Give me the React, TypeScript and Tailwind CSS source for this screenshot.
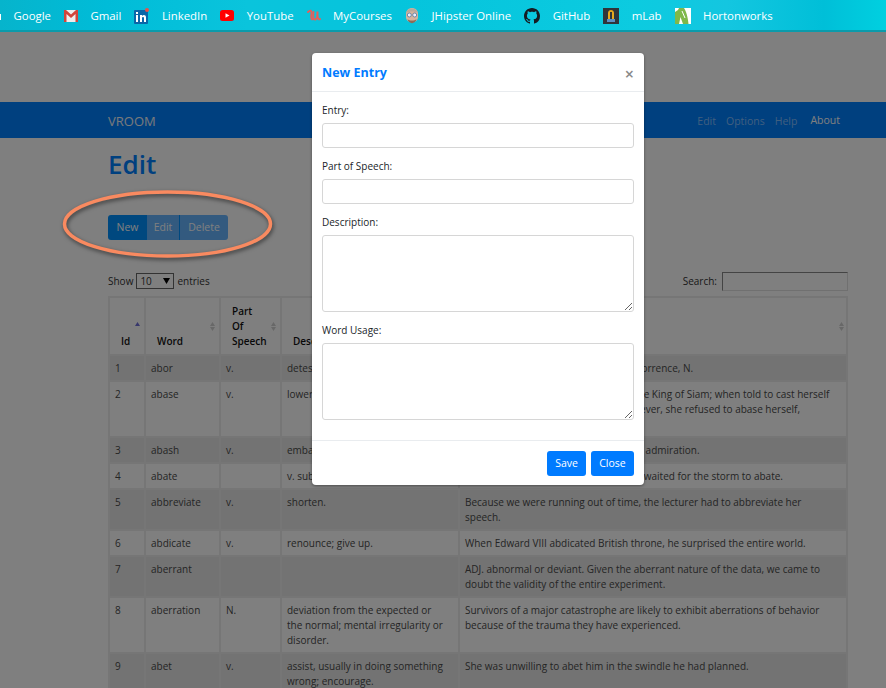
import React from "react";

const FONT = { fontFamily: "'Open Sans', 'Noto Sans', sans-serif" };

function GmailIcon() {
  return (
    <svg width="14" height="12" viewBox="0 0 14 12">
      <rect width="14" height="12" fill="#eee" />
      <path d="M0 0h2l5 4.500L12 0h2v12h-2.500V4L7 8 2.500 4v8H0z" fill="#d1453b" />
    </svg>
  );
}

function LinkedinIcon() {
  return (
    <svg width="15" height="16" viewBox="0 0 15 16">
      <rect x="0" y="2" width="14" height="14" rx="1" fill="#0a66a8" />
      <rect x="2" y="7" width="2" height="7" fill="#fff" />
      <rect x="2" y="4" width="2" height="2" fill="#fff" />
      <path d="M6 7h2v1c1-1.500 4-1.500 4 1.500V14h-2V10c0-1.500-2-1.500-2 0v4H6z" fill="#fff" />
      <circle cx="13" cy="2" r="2" fill="#e8504a" />
    </svg>
  );
}

function YoutubeIcon() {
  return (
    <svg width="14" height="11" viewBox="0 0 14 11">
      <rect width="14" height="11" rx="2.500" fill="#f00" />
      <path d="M5.500 3.200v4.600L9.500 5.500z" fill="#fff" />
    </svg>
  );
}

function UdemyIcon() {
  return (
    <svg width="14" height="13" viewBox="0 0 14 13" fill="none" stroke="#e2605c" strokeWidth="2" strokeLinecap="round">
      <path d="M1 3c2-2 4-2 3.500 2C4 8 4 11 6 10" />
      <path d="M6.500 3C6 7 6 11 8.500 10.500 10 10 10.500 7 10.500 2.500 10.300 7 10.500 11 13 10" />
    </svg>
  );
}

function JhipsterIcon() {
  return (
    <svg width="14" height="18" viewBox="0 0 14 18">
      <path d="M1 7c0-8 12-8 12 0v3c0 7-12 7-12 0z" fill="#d5b49e" />
      <path d="M1 6c1-6 11-6 12 0-3-2-9-2-12 0z" fill="#b9a99c" />
      <circle cx="4.300" cy="8" r="2" fill="#eef" stroke="#5f7f9f" strokeWidth=".9" />
      <circle cx="9.700" cy="8" r="2" fill="#eef" stroke="#5f7f9f" strokeWidth=".9" />
      <path d="M2.500 12c2 2 7 2 9 0-1 5.500-8 5.500-9 0z" fill="#8f6a55" />
    </svg>
  );
}

function GithubIcon() {
  return (
    <svg width="16" height="16" viewBox="0 0 16 16" fill="#151b22">
      <path d="M8 0C3.580 0 0 3.580 0 8c0 3.540 2.290 6.530 5.470 7.590.4.070.55-.17.55-.38 0-.19-.01-.82-.01-1.490-2.010.370-2.530-.49-2.690-.94-.09-.23-.48-.94-.82-1.130-.28-.15-.68-.52-.01-.53.630-.01 1.080.580 1.230.820.720 1.210 1.870.870 2.330.660.070-.520.280-.870.510-1.070-1.780-.2-3.640-.890-3.640-3.950 0-.870.310-1.590.820-2.150-.08-.2-.36-1.020.08-2.120 0 0 .670-.21 2.200.820.640-.18 1.320-.27 2-.27s1.360.09 2 .27c1.530-1.040 2.200-.82 2.200-.82.440 1.100.160 1.920.080 2.120.510.560.820 1.270.820 2.150 0 3.070-1.870 3.750-3.650 3.950.290.250.540.730.540 1.480 0 1.070-.01 1.930-.01 2.200 0 .21.150.460.550.380A8.010 8.010 0 0 0 16 8c0-4.420-3.580-8-8-8z" />
    </svg>
  );
}

function MlabIcon() {
  return (
    <svg width="16" height="16" viewBox="0 0 16 16">
      <rect width="16" height="16" fill="#30343a" />
      <rect x="4" y="11" width="8" height="3" fill="#5c8fc4" />
      <path d="M5 11V5c0-4 6-4 6 0v6z" fill="#e8a81e" />
      <rect x="7" y="4" width="2" height="7" fill="#30343a" />
    </svg>
  );
}

function HortonIcon() {
  return (
    <svg width="16" height="16" viewBox="0 0 16 16">
      <rect width="16" height="16" fill="#fff" />
      <path d="M0 16V4l3-2 1-2h5c2 3 4 9 4.500 16H8L5.500 9 4 16z" fill="#7fb84a" />
      <path d="M7 3l3 7" stroke="#fff" strokeWidth="1" />
    </svg>
  );
}

function Bookmark({ icon, label }: { icon?: React.ReactNode; label: string }) {
  return (
    <div className="flex items-center gap-[12.500px]">
      {icon}
      <span className="text-[11.400px] text-white">{label}</span>
    </div>
  );
}

function SortIcon({ active, last }: { active?: boolean; last?: boolean }) {
  return (
    <svg width="5" height="9" viewBox="0 0 5 9" className={`absolute top-[24px] ${last ? "right-[2px]" : "right-[4px]"}`}>
      <path d="M2.500 0L5 4H0z" fill={active ? "#6f6fd8" : "#d0d0d0"} />
      {!active && <path d="M2.500 9L5 5H0z" fill="#d0d0d0" />}
    </svg>
  );
}

const rows = [
  { id: 1, word: "abor", pos: "v.", desc: "detest", usage: "She looked at this man in disgust; abhorrence, N." },
  { id: 2, word: "abase", pos: "v.", desc: "lower; humiliate.", usage: "Ann would not abase herself before the King of Siam; when told to cast herself down upon the floor by the King, however, she refused to abase herself, notwithstanding his anger." },
  { id: 3, word: "abash", pos: "v.", desc: "embarrass.", usage: "He was not at all abashed by her open admiration." },
  { id: 4, word: "abate", pos: "", desc: "v. subside; moderate.", usage: "Rather than leaving immediately, they waited for the storm to abate." },
  { id: 5, word: "abbreviate", pos: "v.", desc: "shorten.", usage: "Because we were running out of time, the lecturer had to abbreviate her speech." },
  { id: 6, word: "abdicate", pos: "v.", desc: "renounce; give up.", usage: "When Edward VIII abdicated British throne, he surprised the entire world." },
  { id: 7, word: "aberrant", pos: "", desc: "", usage: "ADJ. abnormal or deviant. Given the aberrant nature of the data, we came to doubt the validity of the entire experiment." },
  { id: 8, word: "aberration", pos: "N.", desc: "deviation from the expected or the normal; mental irregularity or disorder.", usage: "Survivors of a major catastrophe are likely to exhibit aberrations of behavior because of the trauma they have experienced." },
  { id: 9, word: "abet", pos: "v.", desc: "assist, usually in doing something wrong; encourage.", usage: "She was unwilling to abet him in the swindle he had planned." },
];

const thClass = "relative border-x-2 border-t-2 border-[#ececec] pl-[5px] pr-[6px] pb-[5px] align-bottom text-left font-semibold text-[#111] leading-[15px]";
const tdClass = "border-2 border-[#ececec] pl-[5px] pr-[6px] pt-[5px] pb-[4px] align-top leading-[15px] text-[#4a4a4a]";

function Field({ label, area }: { label: string; area?: boolean }) {
  return (
    <div className="flex flex-col">
      <label className="mb-[5px] text-[10px] leading-[16px] text-[#212529]">{label}</label>
      {area ? (
        <textarea className="h-[77px] w-full rounded-[3px] border border-[#d6d6d6] bg-white" />
      ) : (
        <input className="h-[25px] w-full rounded-[3px] border border-[#d6d6d6] bg-white" />
      )}
    </div>
  );
}

export default function App() {
  return (
    <div className="flex h-[688px] w-[886px] flex-col overflow-hidden bg-white" style={FONT}>
      {/* bookmarks bar */}
      <div className="relative flex h-[32px] shrink-0 items-center gap-[13px] border-b-2 border-[#0a9bab] bg-[linear-gradient(90deg,#06b4cc_0%,#00bcd8_12%,#0ac4dc_28%,#05c4dc_45%,#0ccbe0_72%,#14c6e0_82%,#00bfd8_93%,#00d0e0_100%)] pl-[13.500px] pt-[2px]">
        <div className="absolute left-0 top-[14px] h-[6px] w-[1px] bg-white" />
        <Bookmark label="Google" />
        <Bookmark icon={<GmailIcon />} label="Gmail" />
        <Bookmark icon={<LinkedinIcon />} label="LinkedIn" />
        <Bookmark icon={<YoutubeIcon />} label="YouTube" />
        <Bookmark icon={<UdemyIcon />} label="MyCourses" />
        <Bookmark icon={<JhipsterIcon />} label="JHipster Online" />
        <Bookmark icon={<GithubIcon />} label="GitHub" />
        <Bookmark icon={<MlabIcon />} label="mLab" />
        <Bookmark icon={<HortonIcon />} label="Hortonworks" />
      </div>

      <div className="relative flex-1 overflow-hidden">
        {/* page */}
        <div className="pt-[70px]">
          <nav className="flex h-[36px] items-center bg-[#0080ff] pl-[108px] pr-[46px] pt-[3px]">
            <span className="text-[13px] text-[#f0f4f8]">VROOM</span>
            <div className="ml-auto flex items-center gap-[10px] text-[10.500px] text-[#80bfff]">
              <span>Edit</span>
              <span>Options</span>
              <span>Help</span>
              <span className="mb-[2px] ml-[3px] text-white">About</span>
            </div>
          </nav>
          <div className="pl-[108px]">
            <h1 className="mt-[8px] text-[26px] font-semibold leading-[36px] text-[#0080ff]">Edit</h1>
            <div className="mt-[33px] flex h-[25px] w-[120px] overflow-hidden rounded-[3px] text-[10.500px] text-white">
              <div className="flex w-[39px] items-center justify-center bg-[#0090ff]">New</div>
              <div className="flex w-[33px] items-center justify-center border-r border-[#0090ff] bg-[#66b4ff]">Edit</div>
              <div className="flex flex-1 items-center justify-center bg-[#66b4ff]">Delete</div>
            </div>
            <div className="mt-[31px] flex h-[20px] w-[740px] items-center text-[10px] text-[#333]">
              <span>Show</span>
              <div className="mx-[3px] flex h-[16px] w-[38px] items-center justify-between border border-[#666] px-[3px]">
                <span>10</span>
                <svg width="7" height="6" viewBox="0 0 7 6"><path d="M0 0h7L3.500 6z" fill="#000" /></svg>
              </div>
              <span>entries</span>
              <span className="ml-auto mr-[5px]">Search:</span>
              <div className="h-[19px] w-[126px] border border-[#e0e0e0] border-l-[#888] border-t-[#888]" />
            </div>
            <table className="mt-[5px] w-[740px] table-fixed border-collapse text-[10px]">
              <colgroup>
                <col className="w-[36px]" />
                <col className="w-[75px]" />
                <col className="w-[61px]" />
                <col className="w-[178px]" />
                <col />
              </colgroup>
              <thead>
                <tr className="h-[58px] border-b-2 border-black">
                  <th className={thClass}><span className="pl-[6px]">Id</span><SortIcon active /></th>
                  <th className={thClass}><span className="pl-[6px]">Word</span><SortIcon /></th>
                  <th className={thClass}><span className="block pl-[6px]">Part<br />Of<br />Speech</span><SortIcon /></th>
                  <th className={thClass}><span className="pl-[6px]">Description</span><SortIcon /></th>
                  <th className={thClass}><span className="pl-[6px]">Word Usage</span><SortIcon last /></th>
                </tr>
              </thead>
              <tbody>
                {rows.map((r) => (
                  <tr key={r.id} className={r.id % 2 === 1 ? "bg-[#e6e6e6]" : "bg-white"}>
                    <td className={tdClass}>{r.id}</td>
                    <td className={tdClass}>{r.word}</td>
                    <td className={tdClass}>{r.pos}</td>
                    <td className={`${tdClass} !pr-[13px]`}>{r.desc}</td>
                    <td className={`${tdClass} !pr-[9px]`}>{r.usage}</td>
                  </tr>
                ))}
              </tbody>
            </table>
          </div>
        </div>

        {/* backdrop */}
        <div className="absolute inset-0 bg-black/50" />

        {/* annotation drawn over the screenshot */}
        <svg width="230" height="82" viewBox="0 0 230 82" className="absolute left-[56px] top-[152px] drop-shadow-[1px_2px_2px_rgba(0,0,0,0.55)]">
          <ellipse cx="111.500" cy="40" rx="103" ry="32" fill="none" stroke="#f98a60" strokeWidth="3.500" />
        </svg>

        {/* modal */}
        <div className="absolute left-[312px] top-[21px] w-[332px] rounded-[4px] bg-white shadow-[0_1px_3px_rgba(0,0,0,0.4)]">
          <div className="flex h-[39px] items-center justify-between border-b border-[#e9ecef] px-[10px] pt-[3px]">
            <h2 className="text-[12.500px] font-bold text-[#007bff]">New Entry</h2>
            <span className="text-[16px] font-semibold leading-none text-[#888]">×</span>
          </div>
          <div className="flex flex-col gap-[10px] px-[10px] pb-[20px] pt-[10px]">
            <Field label="Entry:" />
            <Field label="Part of Speech:" />
            <Field label="Description:" area />
            <Field label="Word Usage:" area />
          </div>
          <div className="flex h-[45px] items-center justify-end gap-[5px] border-t border-[#e9ecef] px-[10px] pt-[1px]">
            <button className="h-[25px] w-[39px] rounded-[3px] bg-[#007bff] text-[10.500px] text-white">Save</button>
            <button className="h-[25px] w-[43px] rounded-[3px] bg-[#007bff] text-[10.500px] text-white">Close</button>
          </div>
        </div>
      </div>
    </div>
  );
}
